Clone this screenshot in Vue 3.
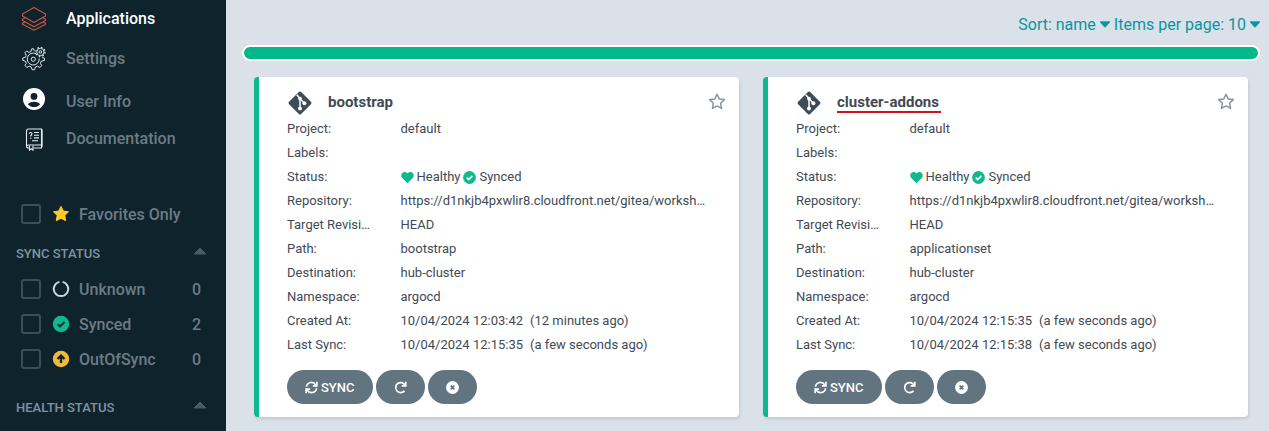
<script setup>
import { ref } from 'vue'

const filters = [
  { name: 'Unknown', count: 0 },
  { name: 'Synced', count: 2 },
  { name: 'OutOfSync', count: 0 },
]

function makeApp(name, path, created, ago, synced) {
  return {
    name,
    rows: [
      { label: 'Project:', value: 'default' },
      { label: 'Labels:', value: '' },
      { label: 'Status:', status: true },
      { label: 'Repository:', value: 'https://d1nkjb4pxwlir8.cloudfront.net/gitea/workshop' },
      { label: 'Target Revision:', value: 'HEAD' },
      { label: 'Path:', value: path },
      { label: 'Destination:', value: 'hub-cluster' },
      { label: 'Namespace:', value: 'argocd' },
      { label: 'Created At:', value: created, ago },
      { label: 'Last Sync:', value: synced, ago: 'a few seconds ago' },
    ],
  }
}

const apps = [
  makeApp('bootstrap', 'bootstrap', '10/04/2024 12:03:42', '12 minutes ago', '10/04/2024 12:15:35'),
  makeApp('cluster-addons', 'applicationset', '10/04/2024 12:15:35', 'a few seconds ago', '10/04/2024 12:15:38'),
]
const marked = ref('cluster-addons')
</script>

<template>
  <div class="layout">
    <aside class="sidebar">
      <nav class="nav">
        <a href="#" class="nav-item active">
          <svg class="nav-icon" viewBox="0 0 26 26" fill="none" stroke="#c25a45" stroke-width="1.1" stroke-linejoin="round">
            <path d="M13 2.5 L24.5 9 V11 L13 17.6 L1.5 11 V9 Z" />
            <path d="M4 12.8 L1.5 14.2 V15.4 L13 21.8 L24.5 15.4 V14.2 L22 12.8" />
            <path d="M4 16.9 L1.5 18.3 V19.3 L13 25.3 L24.5 19.3 V18.3 L22 16.9" />
          </svg>
          <span>Applications</span>
        </a>
        <a href="#" class="nav-item">
          <svg class="nav-icon" viewBox="0 0 26 26" fill="none" stroke="#dfe8ec" stroke-width="1">
            <path d="M13.3 6.2 L12.6 3.8 H10.8 L9.9 6.5 L7.9 7.4 L5.5 6 L3.9 7.7 L5.2 10.2 L4.4 12.2 L1.8 13 V15.4 L4.4 16.2 L5.3 18.3 L4 20.7 L5.8 22.5 L8.2 21.2 L10.3 22 L11.1 24.7 H13.6 L14.4 22 L16.5 21.2 L18.9 22.5 L20.7 20.7 L19.4 18.3 L20.2 16.2 L23.5 15.4 V13.2 L21.2 12.6" />
            <path d="M15 8.7 A6 6 0 1 0 18.2 13.5" />
            <circle cx="12.3" cy="14.2" r="2.1" />
            <circle cx="19.4" cy="7" r="3.7" />
            <circle cx="19.4" cy="7" r="1.3" />
            <circle cx="19.4" cy="7" r="4.6" stroke-width="1.3" stroke-dasharray="1.5 2.11" />
          </svg>
          <span>Settings</span>
        </a>
        <a href="#" class="nav-item">
          <svg class="nav-icon" viewBox="0 0 26 26">
            <circle cx="13" cy="11" r="11" fill="#fff" />
            <circle cx="13" cy="8.4" r="3.4" fill="#0f232d" />
            <path d="M7 16.4 C8 13 18 13 19 16.4 C16 19.8 10 19.8 7 16.4 Z" fill="#0f232d" />
          </svg>
          <span>User Info</span>
        </a>
        <a href="#" class="nav-item">
          <svg class="nav-icon" viewBox="0 0 26 26" fill="none" stroke="#e6edf0" stroke-width="1.1">
            <path d="M8 23 H7.5 C6 23 5.5 22 5.5 21 V6 C5.5 4.8 6.4 4 7.5 4 H20.5 V20 M20.5 20 H7.5 C6.2 20 5.5 20.8 5.5 21.5 M20.5 20 V23 H12.5" />
            <path d="M20.5 4 L21.3 5 V22" stroke-width=".8" />
            <path d="M8.5 20.5 V25.2 L10.3 23.7 L12 25.2 V20.5" />
            <path d="M8.3 8.8 C8.3 7 11 7 11 8.8 C11 10 9.7 10 9.7 11.4 M9.7 12.6 V13.7" />
            <path d="M13 7.5 H18 M13 10.2 H18 M13 12.9 H18 M11 15.7 H17" />
          </svg>
          <span>Documentation</span>
        </a>
      </nav>

      <section class="filters">
        <label class="filter">
          <input type="checkbox" />
          <svg class="filter-icon" viewBox="0 0 18 18"><path fill="#ffca28" stroke="#ffca28" stroke-linejoin="round" d="M9 1.3 L11.3 6 L16.5 6.8 L12.8 10.4 L13.7 15.7 L9 13.2 L4.3 15.7 L5.2 10.4 L1.5 6.8 L6.7 6 Z" /></svg>
          <span>Favorites Only</span>
        </label>
        <button class="group-title" type="button">
          <span>SYNC STATUS</span>
          <svg class="up" viewBox="0 0 14 8"><path d="M7 1 L13 7 H1 Z" /></svg>
        </button>
        <label v-for="f in filters" :key="f.name" class="filter spaced">
          <input type="checkbox" />
          <svg v-if="f.name === 'Unknown'" class="filter-icon" viewBox="0 0 18 18"><path fill="none" stroke="#ccd6dd" stroke-width="2" d="M10.6 1.9 A7.2 7.2 0 1 1 7.4 1.9" /></svg>
          <svg v-else-if="f.name === 'Synced'" class="filter-icon" viewBox="0 0 18 18"><circle cx="9" cy="9" r="8.2" fill="#0fb98d" /><path d="M5.6 9.2 L8 11.5 L12.5 7" fill="none" stroke="#0f232d" stroke-width="1.8" /></svg>
          <svg v-else class="filter-icon" viewBox="0 0 18 18"><circle cx="9" cy="9" r="8.2" fill="#f4b93a" /><path d="M9 13 V6.5 M5.5 9 L9 5.6 L12.5 9" fill="none" stroke="#0f232d" stroke-width="2.3" /></svg>
          <span>{{ f.name }}</span>
          <span class="count">{{ f.count }}</span>
        </label>
        <button class="group-title last" type="button">
          <span>HEALTH STATUS</span>
          <svg class="up" viewBox="0 0 14 8"><path d="M7 1 L13 7 H1 Z" /></svg>
        </button>
      </section>
    </aside>

    <main class="content">
      <div class="toolbar">
        <button type="button" aria-haspopup="menu">Sort: name <svg class="down" viewBox="0 0 10 7"><path d="M.7 1 H9.3 L5 5.8 Z" /></svg></button>
        <button type="button" aria-haspopup="menu">Items per page: 10 <svg class="down" viewBox="0 0 10 7"><path d="M.7 1 H9.3 L5 5.8 Z" /></svg></button>
      </div>
      <div class="health-bar"></div>
      <div class="cards">
        <article v-for="app in apps" :key="app.name" class="card">
          <header class="card-head">
            <svg class="git" viewBox="0 0 26 26">
              <rect x="4.5" y="5.5" width="17" height="17" rx="1.6" transform="rotate(45 13 14)" fill="#3d4c57" />
              <path d="M9.7 5.8 L13 9.2 V19.5 M13 9.7 L17.2 14" fill="none" stroke="#fff" stroke-width="1.5" />
              <circle cx="13" cy="9.6" r="1.9" fill="#fff" /><circle cx="13" cy="19.4" r="2" fill="#fff" /><circle cx="17.4" cy="14.2" r="2" fill="#fff" />
            </svg>
            <h2><span :class="{ marked: app.name === marked }">{{ app.name }}</span></h2>
            <button class="fav" type="button" aria-label="Favorite">
              <svg viewBox="0 0 18 18"><path fill="none" stroke="#8595a3" stroke-width="1.5" stroke-linejoin="round" d="M9 1.2 L11.2 5.9 L16.3 6.6 L12.6 10.2 L13.5 15.4 L9 12.9 L4.5 15.4 L5.4 10.2 L1.7 6.6 L6.8 5.9 Z" /></svg>
            </button>
          </header>
          <dl>
            <div v-for="row in app.rows" :key="row.label" class="row">
              <dt>{{ row.label }}</dt>
              <dd v-if="row.status" class="status">
                <svg class="mark" viewBox="0 0 13 13"><path fill="#0fb98d" d="M6.5 12.2 L1.2 6.9 C-.5 5 .2 1.9 2.5 1.2 C4.1 .7 5.5 1.3 6.5 2.5 C7.5 1.3 8.9 .7 10.5 1.2 C12.8 1.9 13.5 5 11.8 6.9 Z" /></svg>
                <span>Healthy</span>
                <svg class="mark" viewBox="0 0 13 13"><circle cx="6.5" cy="6.5" r="6.4" fill="#0fb98d" /><path d="M3.7 6.7 L5.7 8.6 L9.4 4.9" fill="none" stroke="#fff" stroke-width="1.6" /></svg>
                <span>Synced</span>
              </dd>
              <dd v-else>{{ row.value }}<span v-if="row.ago" class="ago">({{ row.ago }})</span></dd>
            </div>
          </dl>
          <footer class="actions">
            <button type="button">
              <svg viewBox="0 0 14 14" fill="none" stroke="#fff" stroke-width="1.8"><path d="M1.6 6.2 A5.3 5.3 0 0 1 11.5 4.2 M12.8 .9 V5.2 H8.5 M12.4 7.8 A5.3 5.3 0 0 1 2.5 9.8 M1.2 13.1 V8.8 H5.5" /></svg>
              SYNC
            </button>
            <button type="button" aria-label="Refresh">
              <svg viewBox="0 0 14 14" fill="none" stroke="#fff" stroke-width="1.8"><path d="M11.3 10.6 A5.4 5.4 0 1 1 11.9 4.4 M12.7 .8 V5.2 H8.3" /></svg>
            </button>
            <button type="button" aria-label="Delete">
              <svg viewBox="0 0 14 14"><circle cx="7" cy="7" r="6.9" fill="#fff" /><path d="M5 5 L9 9 M9 5 L5 9" stroke="#61747f" stroke-width="1.7" /></svg>
            </button>
          </footer>
        </article>
      </div>
    </main>
  </div>
</template>

<style>
body { background: #dae1e8; }
</style>

<style scoped>
* { box-sizing: border-box; }
.layout {
  display: flex;
  min-height: 100vh;
  font-family: Roboto, "Liberation Sans", sans-serif;
  color: #3f4a55;
}
svg { display: block; flex: none; }
button { font: inherit; border: 0; background: none; padding: 0; cursor: pointer; }
.sidebar { flex: none; width: 226px; background: #0f232d; color: #6c7c84; font-size: 16px; font-weight: 500; }
.nav { display: grid; grid-template-rows: 36px 44px 42px 32px; }
.nav-item { display: flex; align-items: center; gap: 19px; padding-left: 21px; color: inherit; text-decoration: none; }
.nav-item.active { color: #fff; }
.nav-icon { width: 26px; height: 26px; }
.filters { padding: 43px 16px 0; }
.filter { display: flex; align-items: center; height: 34px; padding-left: 5px; }
.filter.spaced { margin-bottom: 1px; }
.filter input { appearance: none; flex: none; width: 20px; height: 20px; margin: 0 11px 0 0; border: 2px solid #3c4d58; border-radius: 3px; }
.filter-icon { width: 18px; height: 18px; margin-right: 9px; }
.count { margin-left: auto; padding-right: 9px; }
.group-title { display: flex; align-items: center; justify-content: space-between; width: 100%; height: 41px; padding: 3px 3px 0 0; color: #8094a0; font-size: 13px; font-weight: 500; }
.group-title.last { margin-top: 9px; }
.up { width: 14px; height: 8px; margin-bottom: 4px; }
.up path { fill: #495b66; stroke: #495b66; stroke-linejoin: round; }
.content { flex: 1; min-width: 0; }
.toolbar { display: flex; justify-content: flex-end; gap: 4px; height: 45px; padding: 4px 9px 0 0; font-size: 16px; }
.toolbar button { display: flex; align-items: center; gap: 4px; color: #0e94a3; }
.down { width: 10px; height: 7px; }
.down path { fill: #0e94a3; stroke: #0e94a3; stroke-width: 1.4; stroke-linejoin: round; }
.health-bar { height: 16px; margin: 0 9px 0 16px; border: 2px solid #fff; border-radius: 8px; background: #00b88a; }
.cards { display: grid; grid-template-columns: 1fr 1fr; gap: 24px; padding: 16px 21px 14px 28px; }
.card { min-width: 0; padding: 13px; background: #fff; border-left: 5px solid #0db98c; border-radius: 4px; box-shadow: 1px 2px 3px #c2cad3; }
.card-head { display: flex; align-items: center; height: 24px; margin-bottom: 3px; padding-left: 15px; }
.git { width: 26px; height: 26px; margin-right: 15px; }
h2 { flex: 1; margin: 0; font-size: 15px; line-height: 24px; font-weight: 700; }
.marked { display: inline-block; line-height: 18px; padding-right: 2px; box-shadow: 0 2px #d4101f; }
.fav svg { width: 18px; height: 18px; }
dl { margin: 0; font-size: 13px; line-height: 24px; }
.row { display: grid; grid-template-columns: 1fr 3fr; }
dt, dd { margin: 0 15px; min-width: 0; overflow: hidden; text-overflow: ellipsis; white-space: nowrap; }
.status { display: flex; align-items: center; gap: 3px; }
.mark { width: 13px; height: 13px; }
.ago { margin-left: 7px; }
.actions { display: flex; gap: 3px; margin-top: 13px; padding-left: 15px; }
.actions button { display: flex; align-items: center; gap: 3px; height: 34px; padding: 0 18px; border-radius: 17px; background: #61747f; color: #fff; font-size: 13px; font-weight: 500; }
.actions svg { width: 13px; height: 13px; }
</style>
